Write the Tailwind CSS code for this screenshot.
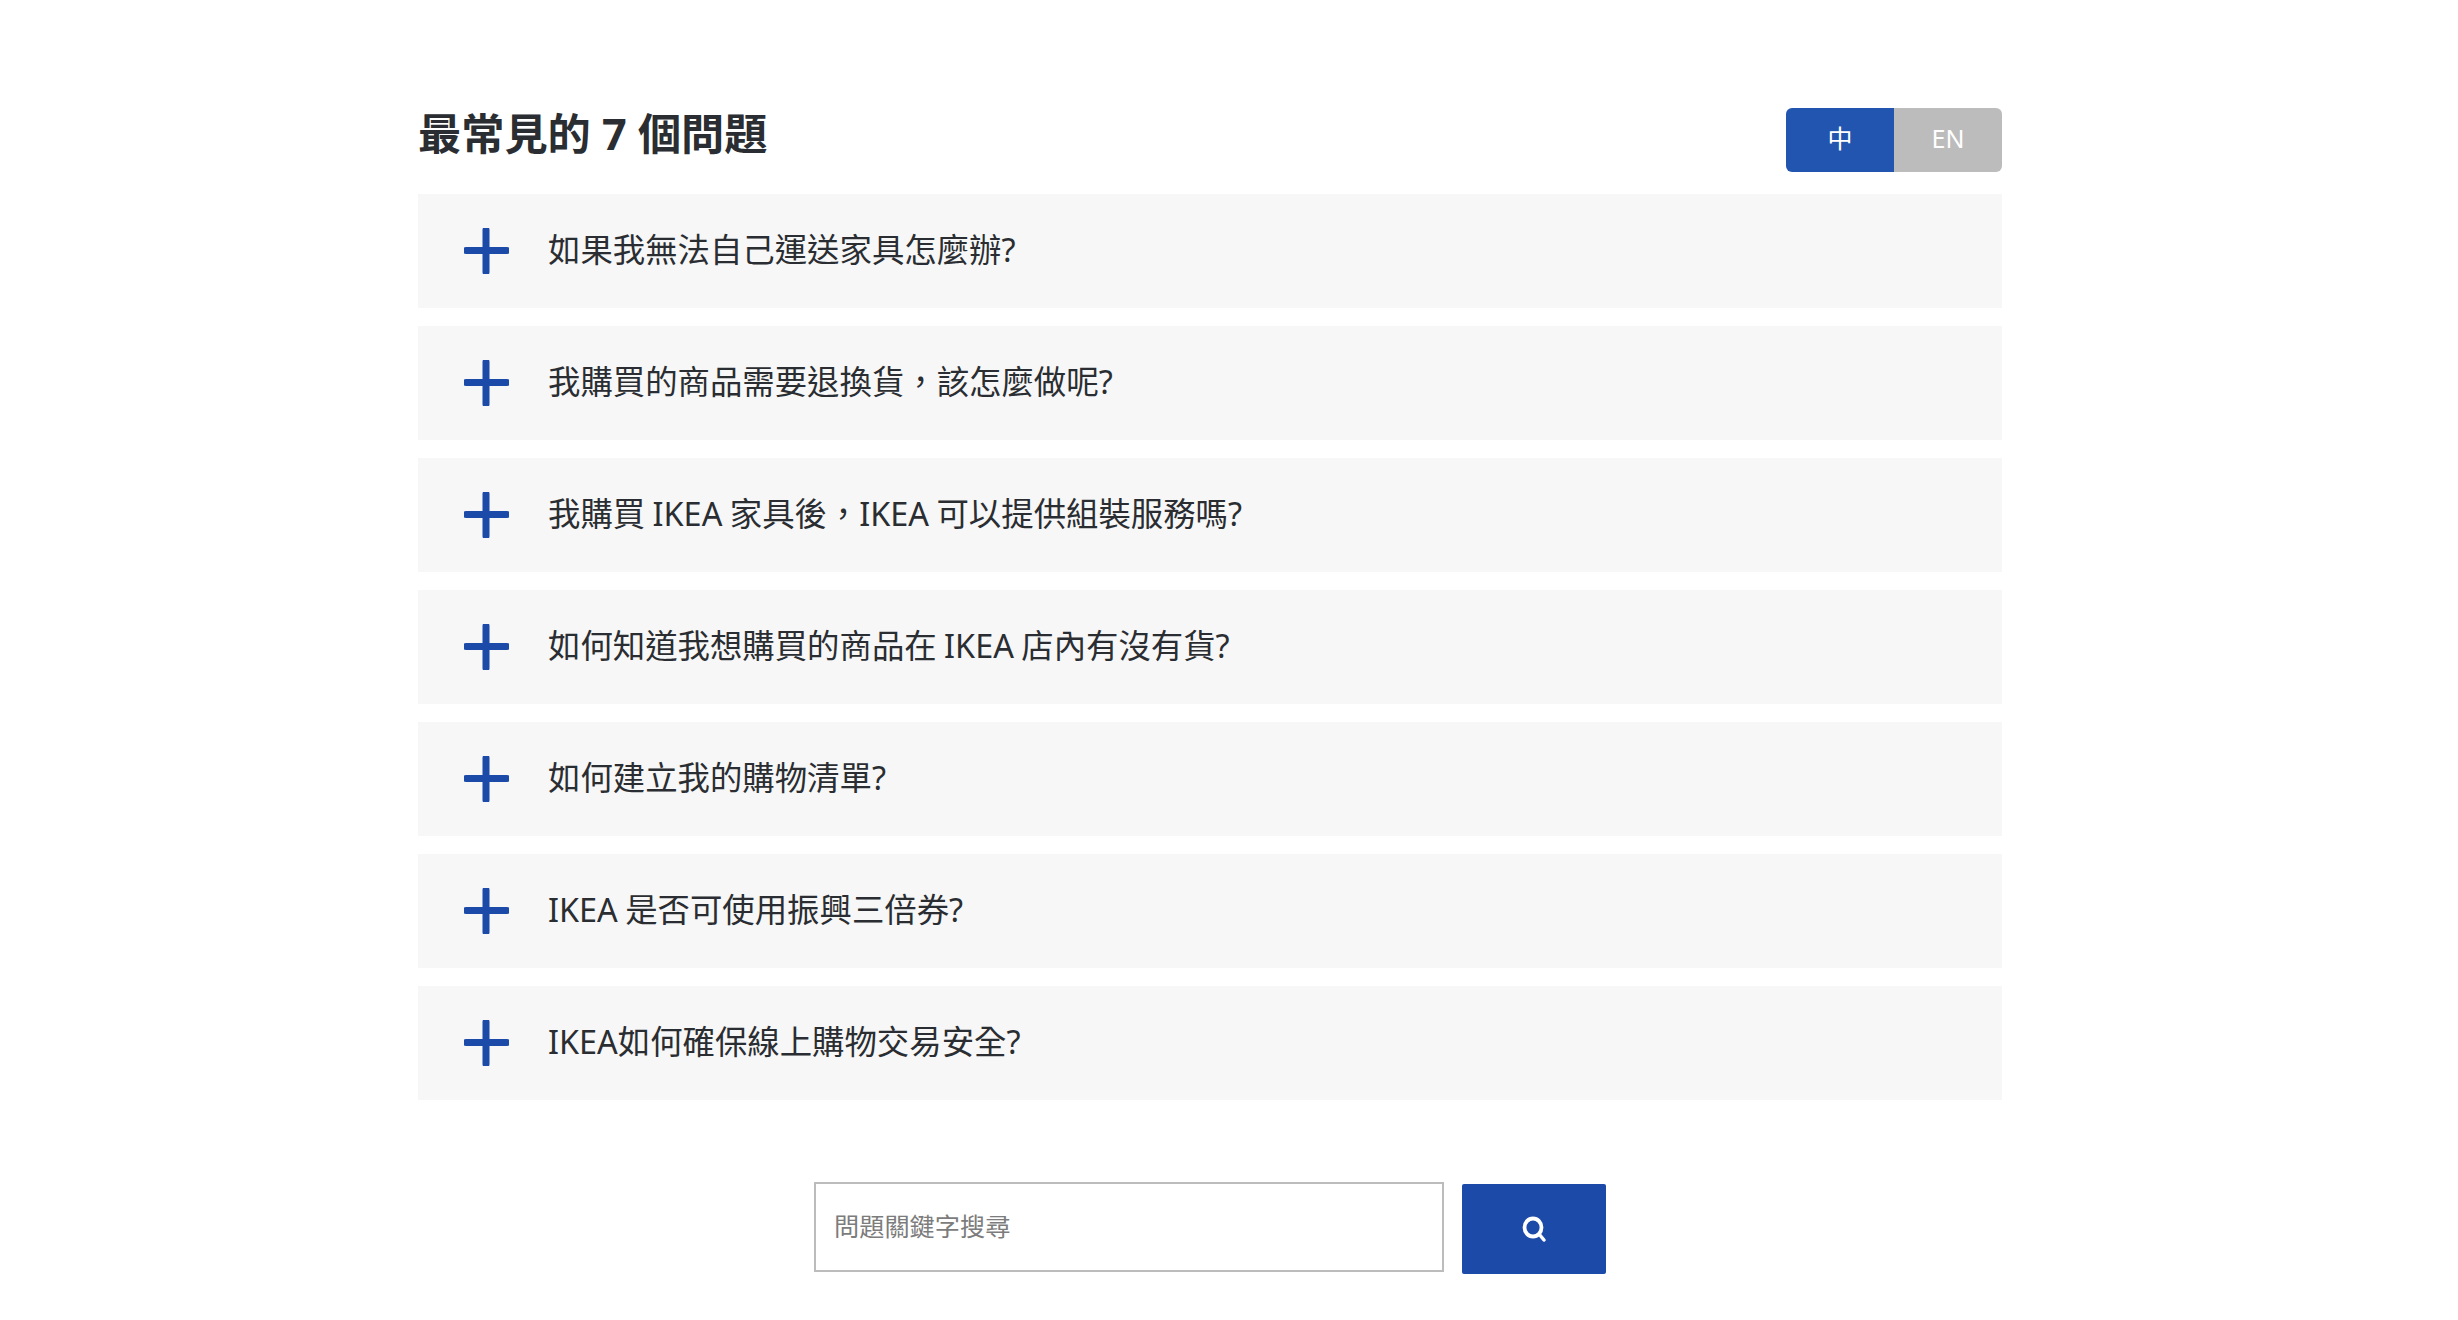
<!DOCTYPE html>
<html lang="zh-Hant">
<head>
    <meta charset="UTF-8" />
    <meta name="viewport" content="width=device-width, initial-scale=1.0" />
    <script src="https://cdn.jsdelivr.net/npm/@tailwindcss/browser@4"></script>
    <title>FAQ</title>
</head>
<body class="bg-white text-[#2a2d31] font-['Noto_Sans','Noto_Sans_CJK_TC',sans-serif]">
    <div class="w-[1584px] ml-[418px] pt-[107px]">
        <div class="flex justify-between items-start h-[87px]">
            <h1 class="text-[43.2px] leading-[54px] font-bold">最常見的 7 個問題</h1>
            <div class="flex h-[64px] w-[216px] mt-px rounded-[6px] overflow-hidden text-[25px] leading-[60px] text-white">
                <button class="flex-1 bg-[#2255b0] pb-[5px]">中</button>
                <button class="flex-1 bg-[#bcbcbc] pb-[5px]">EN</button>
            </div>
        </div>

        <div class="flex flex-col gap-[18px]">
            <div class="flex items-center h-[114px] bg-[#f7f7f7] pl-[46px]">
                <svg class="w-[45px] h-[46px] mr-[38px] text-[#1c4aa8]" viewBox="0 0 45 46"><path d="M22 2v42M2 22.500h41" stroke="currentColor" stroke-width="7" stroke-linecap="round" fill="none" /></svg>
                <span class="text-[32.4px] leading-[44px] pb-[4px] ml-[1px] [word-spacing:-1px]">如果我無法自己運送家具怎麼辦?</span>
            </div>
            <div class="flex items-center h-[114px] bg-[#f7f7f7] pl-[46px]">
                <svg class="w-[45px] h-[46px] mr-[38px] text-[#1c4aa8]" viewBox="0 0 45 46"><path d="M22 2v42M2 22.500h41" stroke="currentColor" stroke-width="7" stroke-linecap="round" fill="none" /></svg>
                <span class="text-[32.4px] leading-[44px] pb-[4px] ml-[1px] [word-spacing:-1px]">我購買的商品需要退換貨，該怎麼做呢?</span>
            </div>
            <div class="flex items-center h-[114px] bg-[#f7f7f7] pl-[46px]">
                <svg class="w-[45px] h-[46px] mr-[38px] text-[#1c4aa8]" viewBox="0 0 45 46"><path d="M22 2v42M2 22.500h41" stroke="currentColor" stroke-width="7" stroke-linecap="round" fill="none" /></svg>
                <span class="text-[32.4px] leading-[44px] pb-[4px] ml-[1px] [word-spacing:-1px]">我購買 IKEA 家具後，IKEA 可以提供組裝服務嗎?</span>
            </div>
            <div class="flex items-center h-[114px] bg-[#f7f7f7] pl-[46px]">
                <svg class="w-[45px] h-[46px] mr-[38px] text-[#1c4aa8]" viewBox="0 0 45 46"><path d="M22 2v42M2 22.500h41" stroke="currentColor" stroke-width="7" stroke-linecap="round" fill="none" /></svg>
                <span class="text-[32.4px] leading-[44px] pb-[4px] ml-[1px] [word-spacing:-1px]">如何知道我想購買的商品在 IKEA 店內有沒有貨?</span>
            </div>
            <div class="flex items-center h-[114px] bg-[#f7f7f7] pl-[46px]">
                <svg class="w-[45px] h-[46px] mr-[38px] text-[#1c4aa8]" viewBox="0 0 45 46"><path d="M22 2v42M2 22.500h41" stroke="currentColor" stroke-width="7" stroke-linecap="round" fill="none" /></svg>
                <span class="text-[32.4px] leading-[44px] pb-[4px] ml-[1px] [word-spacing:-1px]">如何建立我的購物清單?</span>
            </div>
            <div class="flex items-center h-[114px] bg-[#f7f7f7] pl-[46px]">
                <svg class="w-[45px] h-[46px] mr-[38px] text-[#1c4aa8]" viewBox="0 0 45 46"><path d="M22 2v42M2 22.500h41" stroke="currentColor" stroke-width="7" stroke-linecap="round" fill="none" /></svg>
                <span class="text-[32.4px] leading-[44px] pb-[4px] ml-[1px] [word-spacing:-1px]">IKEA 是否可使用振興三倍券?</span>
            </div>
            <div class="flex items-center h-[114px] bg-[#f7f7f7] pl-[46px]">
                <svg class="w-[45px] h-[46px] mr-[38px] text-[#1c4aa8]" viewBox="0 0 45 46"><path d="M22 2v42M2 22.500h41" stroke="currentColor" stroke-width="7" stroke-linecap="round" fill="none" /></svg>
                <span class="text-[32.4px] leading-[44px] pb-[4px] ml-[1px] [word-spacing:-1px]">IKEA如何確保線上購物交易安全?</span>
            </div>
        </div>

        <div class="flex items-start justify-center gap-[18px] mt-[82px]">
            <input class="w-[630px] h-[90px] border-2 border-[#bcbcbc] px-[18px] pb-[2px] text-[25.200px] placeholder:text-[#7c7c7c] outline-none" placeholder="問題關鍵字搜尋" />
            <button class="flex items-center justify-center w-[144px] h-[90px] mt-[2px] rounded-[2px] bg-[#1c4aa8]">
                <svg class="w-[28px] h-[28px] text-white" viewBox="0 0 28 28"><ellipse cx="13" cy="12.500" rx="8.500" ry="9" stroke="currentColor" stroke-width="3.800" fill="none" /><path d="M19 19l5 6" stroke="currentColor" stroke-width="3.500" stroke-linecap="round" /></svg>
            </button>
        </div>
    </div>
</body>
</html>
